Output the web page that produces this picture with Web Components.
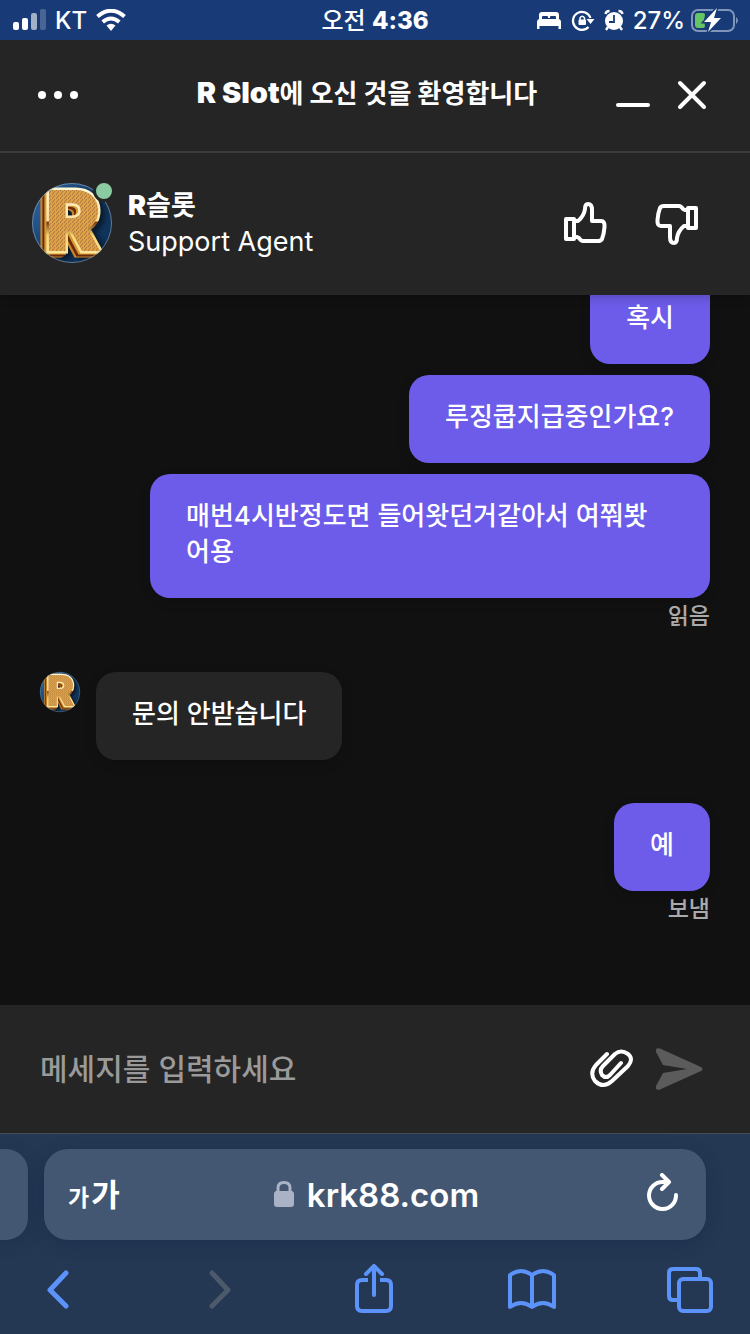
<!DOCTYPE html>
<html lang="ko">
<head>
<meta charset="utf-8">
<meta name="viewport" content="width=device-width, initial-scale=1">
<title>R Slot</title>
<style>
  html, body { margin: 0; background: #111; }
  body { font-family: Inter, "Noto Sans CJK KR", sans-serif; font-size: 26px; line-height: 36px; font-weight: 500; color: #fff; }
  b { font-weight: 900; }
  chat-header b { font-size: 29px; }
</style>
</head>
<body>
<chat-screen>
  <status-bar slot="top"></status-bar>
  <chat-header slot="top"><b>R Slot</b>에 오신 것을 환영합니다</chat-header>
  <agent-bar slot="top">
    <span slot="name"><b>R</b>슬롯</span>
    <span slot="role">Support Agent</span>
  </agent-bar>
  <chat-bubble>혹시</chat-bubble>
  <chat-bubble>루징쿱지급중인가요?</chat-bubble>
  <chat-bubble long>매번4시반정도면 들어왓던거같아서 여쭤봣<br>어용</chat-bubble>
  <read-note>읽음</read-note>
  <chat-bubble from-agent>문의 안받습니다</chat-bubble>
  <chat-bubble reply>예</chat-bubble>
  <read-note>보냄</read-note>
  <message-composer slot="bottom"></message-composer>
  <browser-bar slot="bottom">krk88.com</browser-bar>
</chat-screen>

<script>
const BUTTON = `
  button { all: unset; box-sizing: border-box; display: flex; align-items: center; justify-content: center; cursor: pointer; }
  svg { display: block; flex: none; }
`;

function define(name, html) {
  const template = document.createElement('template');
  template.innerHTML = html;
  customElements.define(name, class extends HTMLElement {
    constructor() {
      super();
      this.attachShadow({ mode: 'open' }).append(template.content.cloneNode(true));
    }
  });
}

define('chat-screen', `
<style>
  :host { display: flex; flex-direction: column; height: 100vh; }
  header, footer { flex: none; position: relative; }
  main { flex: 1; min-height: 0; overflow: hidden; display: flex; flex-direction: column; justify-content: flex-end; align-items: flex-end; gap: 11px; padding: 0 40px 78px; background: #111; }
  header { box-shadow: 0 0 12px rgba(0,0,0,.3); }
</style>
<header><slot name="top"></slot></header>
<main><slot></slot></main>
<footer><slot name="bottom"></slot></footer>`);

define('status-bar', `
<style>
  :host { display: grid; grid-template-columns: 1fr auto 1fr; align-items: center; box-sizing: border-box; height: 40px; padding: 2px 12px 0; background: #183a76; font-size: 24px; line-height: 38px; }
  div { display: flex; align-items: center; }
  .left { gap: 9px; }
  .right { justify-content: flex-end; gap: 9px; }
  .charge { gap: 5px; }
  svg { display: block; flex: none; }
  b { font-weight: 800; }
</style>
<div class="left">
  <svg width="34" height="24" fill="#fff"><rect x="1" y="13" width="6" height="8" rx="2"/><rect x="10" y="9" width="6" height="12" rx="2"/><rect x="19" y="4" width="6" height="17" rx="2" opacity=".6"/><rect x="28" width="6" height="21" rx="2" opacity=".22"/></svg>
  <span>KT</span>
  <svg width="30" height="24" viewBox="0 0 30 24" fill="none" stroke="#fff" stroke-width="4"><path d="M1.500 7.500Q15-4 28.500 7.500"/><path d="M6.700 13Q15 6 23.300 13"/><path d="M10.500 16.500Q15 13 19.500 16.500L15 22Z" fill="#fff" stroke="none"/></svg>
</div>
<time>오전 <b>4:36</b></time>
<div class="right">
  <svg width="26" height="20" viewBox="0 0 26 20" fill="#fff"><path d="M3 8V4Q3 1 6 1H20Q23 1 23 4V8H20V6Q20 5 19 5H15Q14 5 14 6V7H12V6Q12 5 11 5H7Q6 5 6 6V8Z"/><path d="M1 11Q1 8 4 8H22Q25 8 25 11V18H22.500V15H3.500V18H1Z"/></svg>
  <svg width="24" height="24" viewBox="0 0 24 24"><path d="M17.500 18A9 9 0 1 1 19.500 9" fill="none" stroke="#fff" stroke-width="2.200"/><path d="M15.500 10H23.500L19.500 15Z" fill="#fff"/><rect x="7.500" y="10.500" width="7.500" height="5.500" rx="1" fill="#fff"/><path d="M9 11V9Q11.250 5.500 13.500 9V11" fill="none" stroke="#fff" stroke-width="1.500"/></svg>
  <svg width="20" height="24" viewBox="0 0 20 24"><path d="M4 18L2 21M16 18L18 21M1.500 5Q2 2 5.500 2M18.500 5Q18 2 14.500 2" stroke="#fff" stroke-width="2.400" fill="none"/><circle cx="10" cy="12" r="9" fill="#fff"/><path d="M10 6V13H5" fill="none" stroke="#183a76" stroke-width="1.800"/></svg>
  <div class="charge">
    <span>27%</span>
    <svg width="48" height="26" viewBox="0 0 48 26"><rect x="2" y="2" width="42" height="21" rx="6" fill="none" stroke="#7f95ba" stroke-width="2"/><path d="M46 9Q50 12.500 46 16Z" fill="#7f95ba"/><path d="M8 5H13Q15 5 15 7L14 12L15 18Q15 20 13 20H8Q5 20 5 17V8Q5 5 8 5Z" fill="#65c466"/><path d="M27 0L14 14H21L18 24L31 10H24Z" fill="#fff" stroke="#183a76" stroke-width="3" paint-order="stroke"/></svg>
  </div>
</div>`);

define('chat-header', `
<style>
  ${BUTTON}
  :host { display: flex; align-items: center; box-sizing: border-box; height: 113px; padding: 0 28px 2px; background: #252525; border-bottom: 2px solid #3b3b3b; }
  h1 { flex: 1; margin: 0; padding-bottom: 2px; font-size: 26px; line-height: 36px; font-weight: 700; text-align: center; white-space: nowrap; }
  button { width: 60px; height: 60px; }
  .menu { margin-right: 44px; }
  .minimize { margin-left: -1px; }
</style>
<button class="menu" aria-label="메뉴"><svg width="40" height="8" fill="#fff"><circle cx="4" cy="4" r="4"/><circle cx="20" cy="4" r="4"/><circle cx="36" cy="4" r="4"/></svg></button>
<h1><slot></slot></h1>
<button aria-label="최소화"><svg width="36" height="32" stroke="#fff" stroke-width="4" stroke-linecap="round"><path d="M4 26H34"/></svg></button>
<button aria-label="닫기"><svg width="32" height="32" stroke="#fff" stroke-width="4" stroke-linecap="round"><path d="M4 4L28 28M28 4L4 28"/></svg></button>`);

define('agent-avatar', `
<style>
  :host { display: block; width: 80px; height: 80px; flex: none; }
  svg { display: block; width: 100%; height: 100%; overflow: visible; }
  text { font: 900 84px Inter, sans-serif; paint-order: stroke; filter: drop-shadow(-2px 1px 0 #d69a34) drop-shadow(-2px 2px 0 #6b2b0b) drop-shadow(-2px 1px 0 #c98528) drop-shadow(5px 3px 3px #07182a); }
</style>
<svg viewBox="0 0 80 80" role="img" aria-label="R슬롯">
  <defs>
    <radialGradient id="sky" cx=".3" cy=".3" r=".8"><stop offset="0" stop-color="#316db0"/><stop offset="1" stop-color="#0b2d52"/></radialGradient>
    <pattern id="gold" width="4" height="4" patternUnits="userSpaceOnUse"><rect width="4" height="4" fill="#dfa24b"/><path d="M0 4L3 0" stroke="#a8763a" stroke-width="1"/></pattern>
    <linearGradient id="rim" x1="0" y1="0" x2="0" y2="1"><stop offset=".2" stop-color="#fff6d4"/><stop offset=".5" stop-color="#ffe2a0"/><stop offset=".52" stop-color="#7a3913"/><stop offset=".65" stop-color="#f7d777"/><stop offset="1" stop-color="#fff4bc"/></linearGradient>
    <clipPath id="disc"><circle cx="40" cy="40" r="40"/></clipPath>
  </defs>
  <circle cx="40" cy="40" r="40" fill="url(#sky)"/>
  <g clip-path="url(#disc)"><text x="13" y="68" fill="url(#gold)" stroke="url(#rim)" stroke-width="5">R</text></g>
  <circle cx="40" cy="40" r="39.500" fill="none" stroke="#9daab5" stroke-opacity=".6"/>
</svg>`);

define('agent-bar', `
<style>
  ${BUTTON}
  :host { display: flex; align-items: center; box-sizing: border-box; height: 142px; padding: 0 43px 2px 32px; background: #252525; font-size: 27px; }
  .photo { position: relative; }
  .online { position: absolute; top: -3px; right: -3px; width: 16px; height: 16px; border: 3px solid #252525; border-radius: 50%; background: #8bcba1; }
  .who { flex: 1; padding: 2px 0 0 16px; }
  .name { font-weight: 700; }
  .role { font-weight: 400; }
  button { width: 60px; height: 60px; }
  .up { margin-right: 32px; }
</style>
<div class="photo"><agent-avatar></agent-avatar><span class="online"></span></div>
<div class="who"><div class="name"><slot name="name"></slot></div><div class="role"><slot name="role"></slot></div></div>
<button class="up" aria-label="좋아요"><svg width="44" height="44" viewBox="0 0 44 44" fill="none" stroke="#fff" stroke-width="4" stroke-linejoin="round"><path d="M3 18H11V38H3Z"/><path d="M11 20H15Q21 15 22 8Q22 3 25 3Q29 3 29 9V20H38Q42 20 41.500 26Q41 33 39 38Q38 40 35 40H20Q18 40 16 37L14 36H11"/></svg></button>
<button aria-label="싫어요"><svg width="44" height="44" viewBox="0 0 44 44" fill="none" stroke="#fff" stroke-width="4" stroke-linejoin="round"><path d="M41 27H33V7H41Z"/><path d="M33 25H29Q23 30 22 37Q22 42 19 42Q15 42 15 36V25H6Q2 25 2.500 19Q3 12 5 7Q6 5 9 5H24Q26 5 28 8L30 9H33"/></svg></button>`);

define('chat-bubble', `
<style>
  :host { display: flex; flex: none; gap: 16px; max-width: calc(100% - 110px); }
  :host([long]) { width: 100%; }
  :host([from-agent]) { align-self: flex-start; margin-top: 27px; }
  :host([reply]) { margin-top: 32px; }
  agent-avatar { display: none; width: 40px; height: 40px; }
  :host([from-agent]) agent-avatar { display: block; }
  p { flex: 1; margin: 0; padding: 24px 36px 28px; border-radius: 20px; background: #6c5ce9; box-shadow: 0 4px 12px rgba(0,0,0,.15); }
  :host([from-agent]) p { background: #252525; }
</style>
<agent-avatar></agent-avatar><p><slot></slot></p>`);

define('read-note', `
<style>
  :host { display: block; flex: none; margin-top: -11px; font-size: 23px; color: #aaa; }
</style>
<slot></slot>`);

define('message-composer', `
<style>
  ${BUTTON}
  :host { display: block; background: #252525; }
  form { display: flex; align-items: center; height: 128px; padding: 0 40px; }
  input { flex: 1; min-width: 0; border: 0; padding: 0; outline: 0; background: none; color: #fff; font: inherit; font-size: 30px; line-height: 40px; }
  input::placeholder { color: #9a9a9a; opacity: 1; }
  button { height: 60px; width: 60px; }
  .send { margin-left: 8px; }
</style>
<form onsubmit="return false">
  <input type="text" aria-label="메세지" placeholder="메세지를 입력하세요">
  <button type="button" aria-label="파일 첨부"><svg width="44" height="40" viewBox="0 0 44 40" fill="none" stroke="#fff" stroke-width="4" stroke-linecap="round" stroke-linejoin="round"><path d="M17 5L6 16Q-1 24 5 32Q13 40 22 32L38 17Q44 10 38 5Q31 0 25 5L13 17Q9 21 12 26Q16 30 20 26L31 14"/></svg></button>
  <button class="send" aria-label="보내기"><svg width="48" height="44" viewBox="0 0 48 44" fill="#5b5b5b"><path d="M4 1.500L45 20Q48 22 45 24L4 42.500Q-1 44 0 39L7 26L31 22L7 18L0 5Q-1 0 4 1.500Z"/></svg></button>
</form>`);

define('browser-bar', `
<style>
  ${BUTTON}
  :host { display: block; box-sizing: border-box; height: 201px; padding-top: 15px; background: #243753; border-top: 1px solid #454b54; }
  .tabs { display: flex; gap: 16px; height: 91px; padding-right: 44px; }
  .previous, .address { background: #435773; box-shadow: 0 4px 16px rgba(20,40,70,.4); }
  .previous { width: 28px; border-radius: 0 22px 22px 0; }
  .address { flex: 1; display: grid; grid-template-columns: 1fr auto 1fr; align-items: center; box-sizing: border-box; padding: 0 21px 0 24px; border-radius: 24px; }
  .size { justify-self: start; align-items: baseline; gap: 2px; padding-top: 4px; font-weight: 600; font-size: 31px; line-height: 40px; }
  .size small { font-size: 23px; }
  a { display: flex; align-items: center; gap: 13px; color: #fff; text-decoration: none; font-size: 33px; line-height: 44px; font-weight: 600; }
  .reload { justify-self: end; }
  nav { display: flex; justify-content: space-between; padding: 24px 34px 0 32px; color: #5b93fa; }
  nav svg, .reload svg { fill: none; stroke: currentColor; stroke-width: 4; stroke-linecap: round; stroke-linejoin: round; }
  nav .arrow { stroke-width: 5; }
  button:disabled { color: #4c5a6b; }
</style>
<div class="tabs">
  <div class="previous"></div>
  <div class="address">
    <button class="size" aria-label="글자 크기"><small>가</small><span>가</span></button>
    <a href="https://krk88.com"><svg width="20" height="28" viewBox="0 0 20 28"><rect y="10" width="20" height="16" rx="3" fill="#a9b3c5"/><path d="M4 11V7Q4 1.500 10 1.500Q16 1.500 16 7V11" fill="none" stroke="#a9b3c5" stroke-width="3"/></svg><slot></slot></a>
    <button class="reload" aria-label="새로고침"><svg width="40" height="44" viewBox="0 0 40 44"><path d="M31 22A13.500 13.500 0 1 1 18 9H23"/><path d="M17 2L24 9L17 16"/></svg></button>
  </div>
</div>
<nav aria-label="브라우저">
  <button aria-label="뒤로"><svg class="arrow" width="52" height="52"><path d="M34 9L18 26L34 42"/></svg></button>
  <button aria-label="앞으로" disabled><svg class="arrow" width="52" height="52"><path d="M22 9L38 26L22 42"/></svg></button>
  <button aria-label="공유"><svg width="52" height="52"><path stroke-linecap="butt" d="M20 16H14Q9 16 9 21V42Q9 47 14 47H38Q43 47 43 42V21Q43 16 38 16H32"/><path d="M26 31V3M18 10L26 2L34 10"/></svg></button>
  <button aria-label="책갈피"><svg width="52" height="52"><path d="M26 11Q15 3 4 11V43Q15 35 26 43Q37 35 48 43V11Q37 3 26 11V43"/></svg></button>
  <button aria-label="탭"><svg width="52" height="52"><rect x="15" y="15" width="32" height="32" rx="4"/><path d="M15 36H9Q5 36 5 32V9Q5 5 9 5H32Q36 5 36 9V15"/></svg></button>
</nav>`);
</script>
</body>
</html>
